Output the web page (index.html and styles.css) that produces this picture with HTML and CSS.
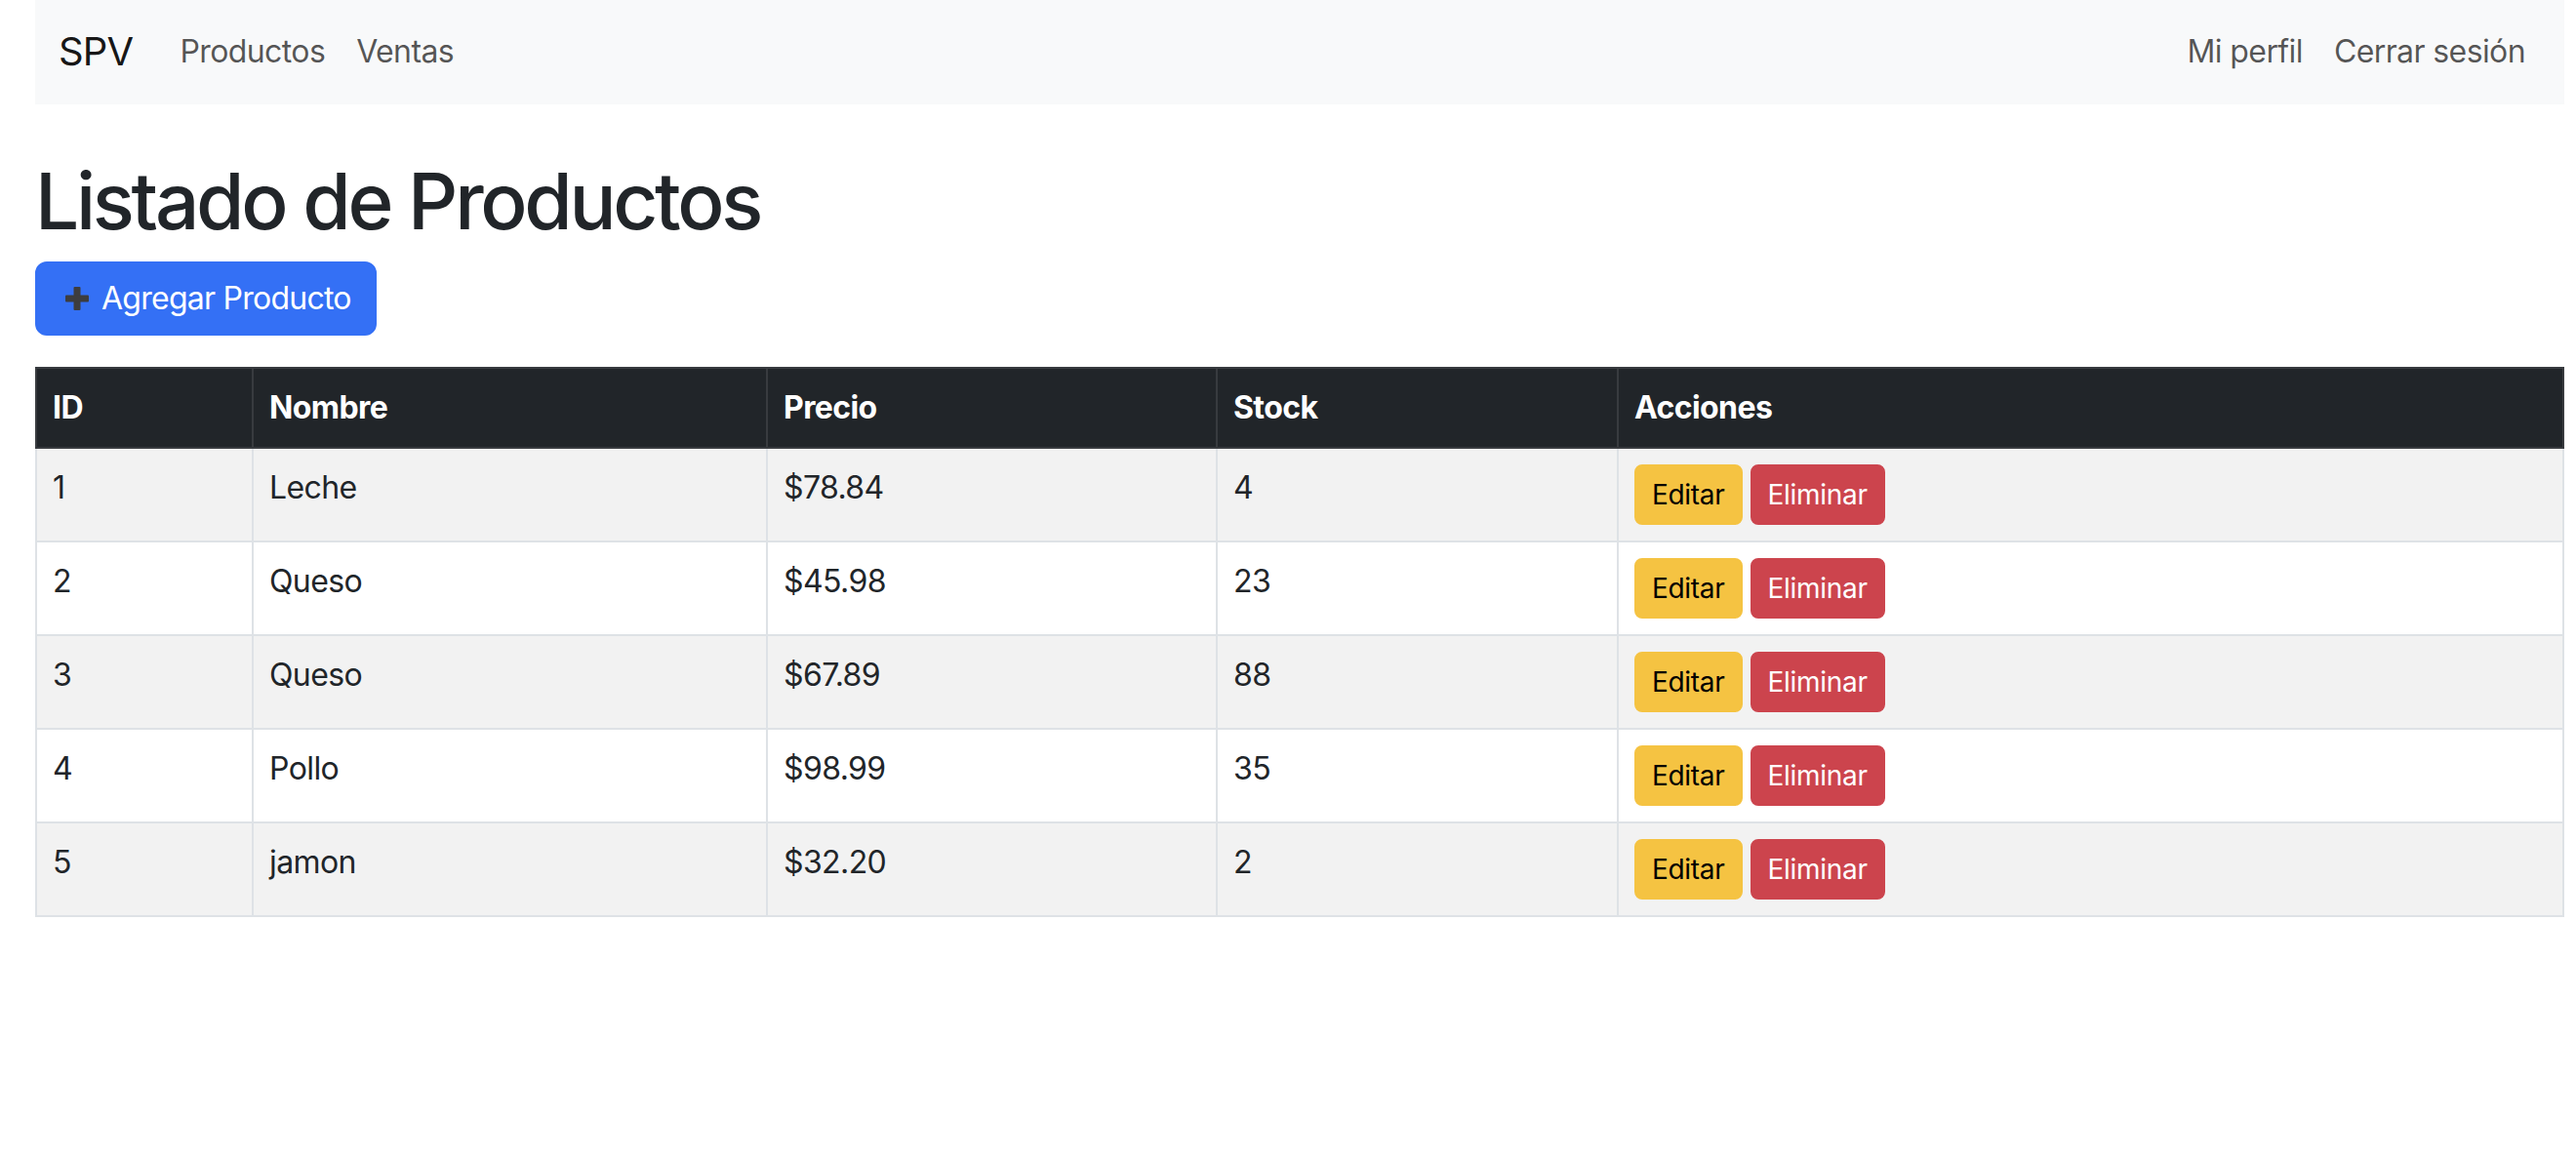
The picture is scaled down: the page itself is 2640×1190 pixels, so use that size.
FILE: index.html
```html
<!DOCTYPE html>
<html lang="es">
<head>
<meta charset="utf-8">
<title>Listado de Productos</title>
<link rel="stylesheet" href="styles.css">
</head>
<body>
<div class="page">
  <nav class="navbar">
    <div class="nav-inner">
      <a class="brand" href="#">SPV</a>
      <ul class="nav-list">
        <li><a class="nav-link" href="#">Productos</a></li>
        <li><a class="nav-link" href="#">Ventas</a></li>
      </ul>
      <ul class="nav-list nav-right">
        <li><a class="nav-link" href="#">Mi perfil</a></li>
        <li><a class="nav-link" href="#">Cerrar sesión</a></li>
      </ul>
    </div>
  </nav>

  <main class="content">
    <h1 class="title">Listado de Productos</h1>
    <a class="btn btn-primary" href="#"><svg class="plus" viewBox="0 0 24 24" width="24" height="24" aria-hidden="true"><rect x="8.5" y="0" width="7" height="24" rx="1"/><rect x="0" y="8.5" width="24" height="7" rx="1"/></svg> Agregar Producto</a>

    <table class="table">
      <colgroup>
        <col class="c-id">
        <col class="c-name">
        <col class="c-price">
        <col class="c-stock">
        <col class="c-actions">
      </colgroup>
      <thead>
        <tr><th>ID</th><th>Nombre</th><th>Precio</th><th>Stock</th><th>Acciones</th></tr>
      </thead>
      <tbody>
        <tr class="odd"><td>1</td><td>Leche</td><td>$78.84</td><td>4</td><td><a class="btn-sm btn-warning" href="#">Editar</a><a class="btn-sm btn-danger" href="#">Eliminar</a></td></tr>
        <tr><td>2</td><td>Queso</td><td>$45.98</td><td>23</td><td><a class="btn-sm btn-warning" href="#">Editar</a><a class="btn-sm btn-danger" href="#">Eliminar</a></td></tr>
        <tr class="odd"><td>3</td><td>Queso</td><td>$67.89</td><td>88</td><td><a class="btn-sm btn-warning" href="#">Editar</a><a class="btn-sm btn-danger" href="#">Eliminar</a></td></tr>
        <tr><td>4</td><td>Pollo</td><td>$98.99</td><td>35</td><td><a class="btn-sm btn-warning" href="#">Editar</a><a class="btn-sm btn-danger" href="#">Eliminar</a></td></tr>
        <tr class="odd"><td>5</td><td>jamon</td><td>$32.20</td><td>2</td><td><a class="btn-sm btn-warning" href="#">Editar</a><a class="btn-sm btn-danger" href="#">Eliminar</a></td></tr>
      </tbody>
    </table>
  </main>
</div>
</body>
</html>
```

FILE: styles.css
```css
* { box-sizing: border-box; }

html, body {
  margin: 0;
  padding: 0;
  background: #ffffff;
}

body {
  font-family: Inter, "Noto Sans", "Liberation Sans", sans-serif;
  font-size: 32px;
  line-height: 48px;
  letter-spacing: -0.6px;
  color: #212529;
}

a { text-decoration: none; }

.page {
  padding: 0 12px 0 36px;
}

/* Navbar */
.navbar {
  background: #f8f9fa;
  padding: 13px 0 14px;
}

.nav-inner {
  display: flex;
  align-items: center;
  padding: 0 24px;
}

.brand {
  font-size: 40px;
  line-height: 60px;
  padding: 10px 0;
  margin-right: 32px;
  letter-spacing: -0.8px;
  color: rgba(0, 0, 0, 0.92);
}

.nav-list {
  display: flex;
  list-style: none;
  margin: 0;
  padding: 0;
}

.nav-right {
  margin-left: auto;
}

.nav-link {
  display: block;
  padding: 16px;
  color: rgba(0, 0, 0, 0.66);
}

/* Content */
.title {
  font-size: 80px;
  line-height: 96px;
  font-weight: 500;
  letter-spacing: -3.3px;
  margin: 51px 0 14px;
  color: #212529;
}

.btn {
  display: inline-flex;
  align-items: center;
  gap: 13px;
  padding: 12px 24px 12px 29px;
  border: 2px solid transparent;
  border-radius: 12px;
  font-size: 32px;
  line-height: 48px;
  letter-spacing: -0.75px;
}

.btn-primary {
  background: #3470f5;
  border-color: #3470f5;
  color: #ffffff;
}

.plus {
  fill: #3d3d3f;
  flex: none;
}

/* Table */
.table {
  width: 100%;
  margin-top: 32px;
  border-collapse: collapse;
  vertical-align: top;
}

.c-id { width: 222px; }
.c-name { width: 527px; }
.c-price { width: 461px; }
.c-stock { width: 411px; }

.table th,
.table td {
  padding: 16px;
  text-align: left;
  vertical-align: top;
  border: 2px solid #dee2e6;
}

.table thead th {
  background: #212529;
  color: #ffffff;
  font-weight: 700;
  border-color: #383b3f;
}

.table tbody tr.odd td {
  background: #f2f2f2;
}

.table tbody td {
  color: #212529;
}

.btn-sm {
  display: inline-block;
  vertical-align: top;
  padding: 8px 16px;
  border: 2px solid transparent;
  border-radius: 8px;
  font-size: 28px;
  line-height: 42px;
  letter-spacing: -0.3px;
}

.btn-sm + .btn-sm {
  margin-left: 8px;
}

.btn-warning {
  background: #f5c342;
  border-color: #f5c342;
  color: #000000;
}

.btn-danger {
  background: #cc444d;
  border-color: #cc444d;
  color: #ffffff;
}
```
